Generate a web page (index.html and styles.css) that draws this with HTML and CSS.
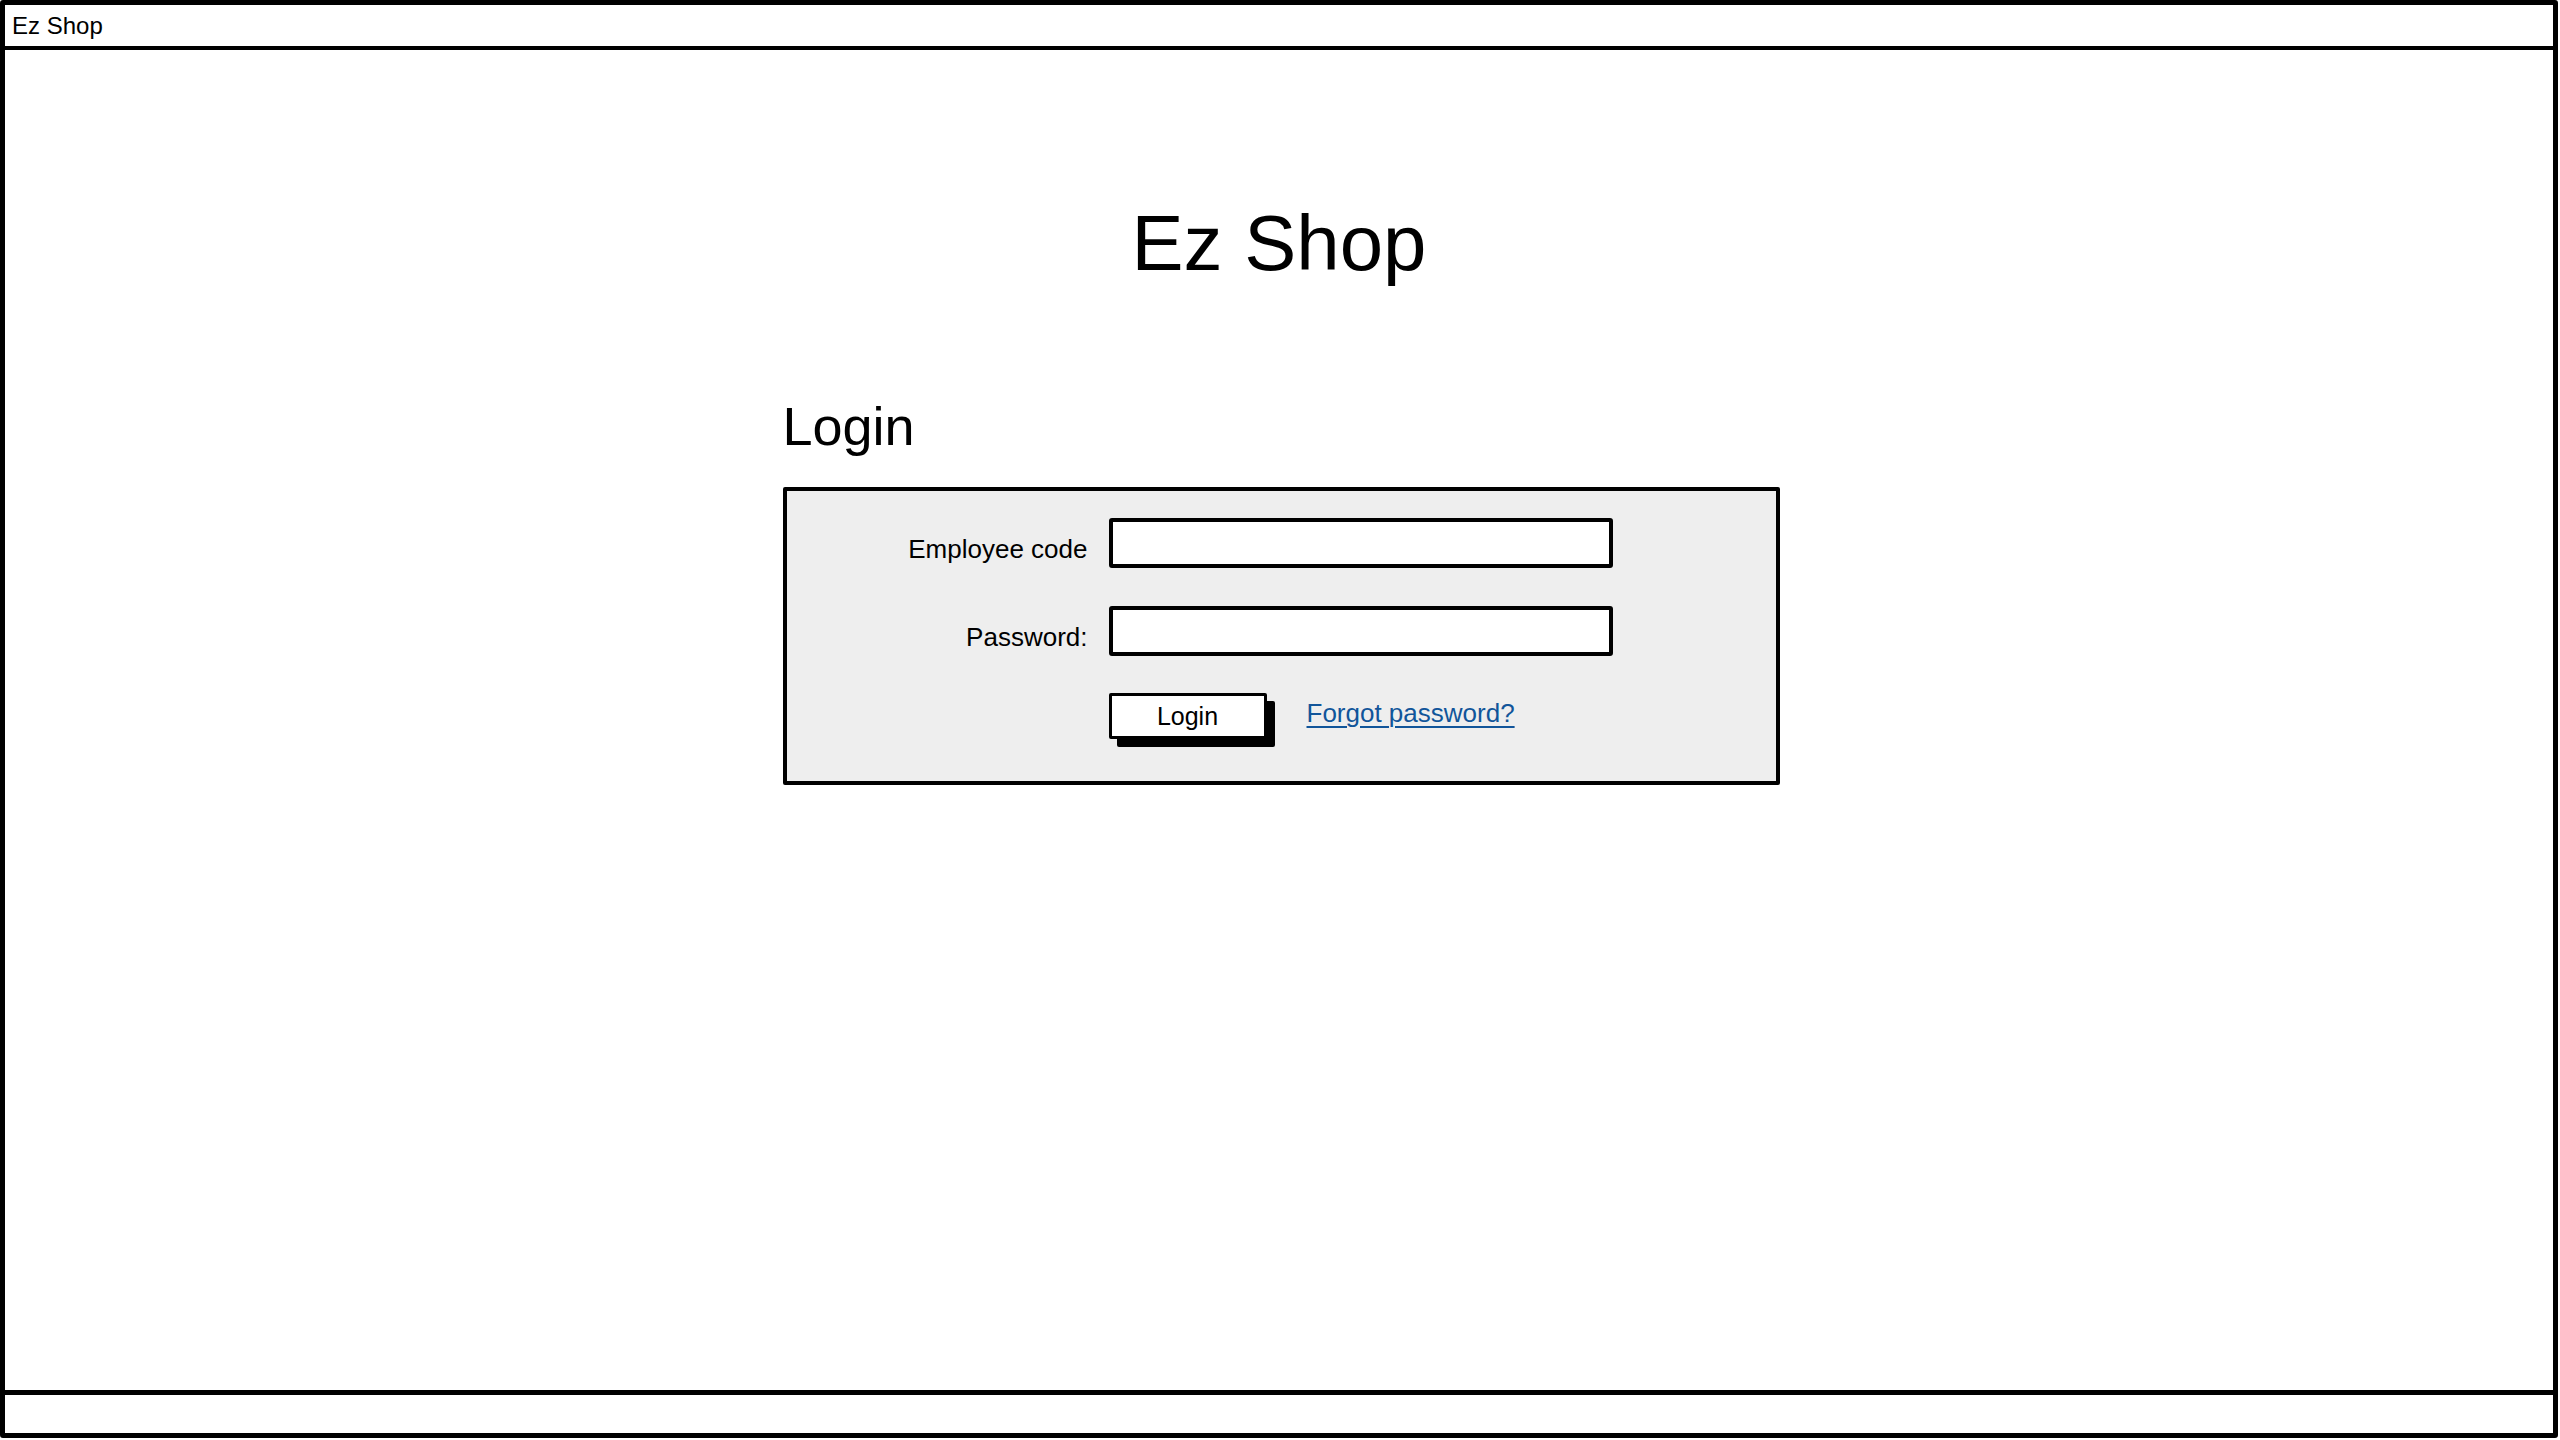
FILE: index.html
```html
<!DOCTYPE html>
<html lang="en">
<head>
<meta charset="utf-8">
<title>Ez Shop</title>
<link rel="stylesheet" href="styles.css">
</head>
<body>
<div class="window">
  <div class="titlebar">Ez Shop</div>
  <main class="main">
    <h1 class="app-title">Ez Shop</h1>
    <section class="panel">
      <h2 class="panel-title">Login</h2>
      <form class="login-box">
        <label class="field-label" for="code">Employee code</label>
        <input class="field-input" id="code" type="text">
        <label class="field-label" for="pwd">Password:</label>
        <input class="field-input" id="pwd" type="password">
        <div class="actions">
          <button class="btn" type="button">Login</button>
          <a class="link" href="#">Forgot password?</a>
        </div>
      </form>
    </section>
  </main>
  <footer class="footer"></footer>
</div>
</body>
</html>
```
FILE: styles.css
```css
* { box-sizing: border-box; }
html, body { margin: 0; padding: 0; background: #fff; }
body {
  font-family: "Liberation Sans", Arial, sans-serif;
  color: #000;
}
.window {
  width: 2558px;
  height: 1438px;
  border: 5px solid #000;
  border-radius: 3px;
  display: flex;
  flex-direction: column;
  background: #fff;
}
.titlebar {
  height: 45px;
  border-bottom: 4px solid #000;
  font-size: 24px;
  line-height: 41px;
  padding-left: 7px;
  flex: none;
}
.main {
  flex: 1;
  display: flex;
  flex-direction: column;
  align-items: center;
}
.app-title {
  margin: 154px 0 0;
  font-size: 78px;
  line-height: 78px;
  font-weight: normal;
  text-align: center;
}
.panel {
  width: 997px;
  margin-top: 117px;
  margin-left: 4px;
}
.panel-title {
  margin: 0 0 34px;
  font-size: 54px;
  line-height: 54px;
  font-weight: normal;
  padding-left: 0;
}
.login-box {
  margin: 0;
  background: #eeeeee;
  border: 4px solid #000;
  border-radius: 2px;
  padding: 27px 0 42px;
  display: grid;
  grid-template-columns: 301px 504px;
  column-gap: 21px;
  row-gap: 38px;
  align-items: start;
}
.field-label {
  text-align: right;
  font-size: 26px;
  line-height: 38px;
  margin-top: 12px;
}
.field-input {
  height: 50px;
  width: 504px;
  border: 4px solid #000;
  border-radius: 3px;
  background: #fff;
  margin: 0;
  padding: 0 8px;
  font: inherit;
}
.actions {
  grid-column: 2;
  display: flex;
  align-items: flex-start;
  gap: 40px;
  margin-top: -1px;
}
.btn {
  width: 158px;
  height: 46px;
  border: 3px solid #000;
  border-radius: 2px;
  background: #fff;
  box-shadow: 8px 8px 0 #000;
  font-family: "Liberation Sans", Arial, sans-serif;
  font-size: 25px;
  line-height: 40px;
  padding: 0;
  color: #000;
}
.link {
  font-size: 26px;
  line-height: 40px;
  color: #11559a;
  text-decoration: underline;
  text-decoration-thickness: 2px;
  text-underline-offset: 4px;
}
.footer {
  flex: none;
  height: 43px;
  border-top: 5px solid #000;
}
```
